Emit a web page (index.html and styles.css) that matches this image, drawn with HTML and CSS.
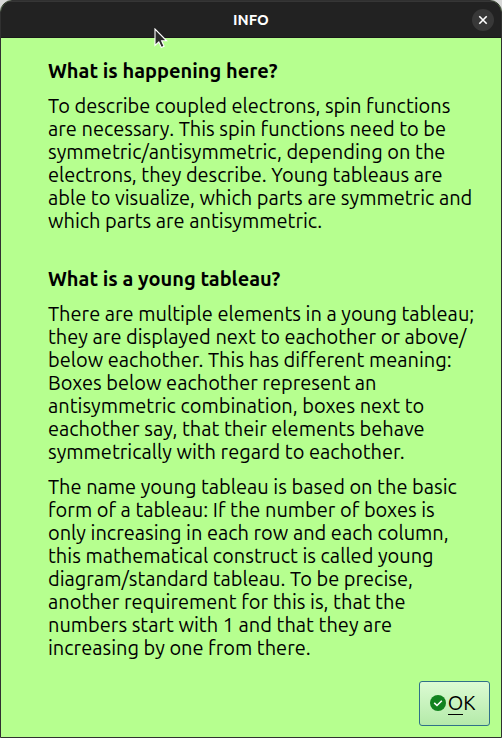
FILE: index.html
```
<!DOCTYPE html>
<html lang="en">
<head>
<meta charset="utf-8">
<meta name="viewport" content="width=device-width, initial-scale=1">
<title>INFO</title>
<link rel="stylesheet" href="styles.css">
</head>
<body>
<div class="window" role="dialog" aria-labelledby="window-title">
  <header class="titlebar">
    <span class="title" id="window-title">INFO</span>
    <button class="close" type="button" aria-label="Close">
      <svg width="22" height="22" viewBox="0 0 22 22" aria-hidden="true"><path d="M7.300 7.300l7.400 7.400M14.700 7.300l-7.400 7.400" stroke="#fff" stroke-width="1.600" fill="none"/></svg>
    </button>
  </header>
  <main class="content">
    <section class="section">
      <h2>What is happening here?</h2>
      <p>To describe coupled electrons, spin functions<br>are necessary. This spin functions need to be<br>symmetric/antisymmetric, depending on the<br>electrons, they describe. Young tableaus are<br>able to visualize, which parts are symmetric and<br>which parts are antisymmetric.</p>
    </section>
    <section class="section">
      <h2>What is a young tableau?</h2>
      <p>There are multiple elements in a young tableau;<br>they are displayed next to eachother or above/<br>below eachother. This has different meaning:<br>Boxes below eachother represent an<br>antisymmetric combination, boxes next to<br>eachother say, that their elements behave<br>symmetrically with regard to eachother.</p>
      <p>The name young tableau is based on the basic<br>form of a tableau: If the number of boxes is<br>only increasing in each row and each column,<br>this mathematical construct is called young<br>diagram/standard tableau. To be precise,<br>another requirement for this is, that the<br>numbers start with 1 and that they are<br>increasing by one from there.</p>
    </section>
  </main>
  <footer class="actions">
    <button class="ok" type="button" accesskey="o">
      <svg width="16" height="16" viewBox="0 0 16 16" aria-hidden="true"><circle cx="8" cy="8" r="8" fill="#12831f"/><path d="M4.200 7.800l2.800 2.700 4.800-4.700" stroke="#fff" stroke-width="1.600" fill="none"/></svg>
      <span><span class="mnemonic">O</span>K</span>
    </button>
  </footer>
  <svg class="pointer" width="14" height="21" viewBox="0 0 14 21" aria-hidden="true"><path d="M1 1v16.500l3.800-3.600 2.500 5.600 2.800-1.200-2.500-5.500h5z" fill="#2b2b2b" stroke="#fff" stroke-width="1.100"/></svg>
</div>
</body>
</html>
```
FILE: styles.css
```
* {
  box-sizing: border-box;
}

body {
  margin: 0;
  background: #d8d8d8;
  color: #000;
  font: 20px/23px Ubuntu, "Noto Sans", sans-serif;
}

.window {
  position: relative;
  display: flex;
  flex-direction: column;
  min-height: 100vh;
  overflow: hidden;
  border: 1px solid #303030;
  border-radius: 12px 12px 0 0;
  background: #b6ff8f;
}

.titlebar {
  display: grid;
  grid-template-columns: 1fr auto 1fr;
  align-items: center;
  height: 37px;
  padding: 0 7px;
  border-top: 1px solid #363636;
  border-bottom: 1px solid #191919;
  background: #222;
}

.title {
  grid-column: 2;
  color: #fff;
  font-size: 15px;
  font-weight: 700;
}

.close {
  display: flex;
  justify-self: end;
  padding: 0;
  border: 0;
  border-radius: 50%;
  background: #383838;
}

.content {
  flex: 1;
  padding: 21px 0 22px 47px;
  white-space: nowrap;
}

.section + .section {
  margin-top: 35px;
}

h2 {
  margin: 0;
  font-size: 20px;
  font-weight: 700;
}

p {
  margin: 12px 0 0;
}

.actions {
  display: flex;
  justify-content: flex-end;
  padding: 0 11px 11px;
}

.ok {
  display: flex;
  align-items: center;
  justify-content: center;
  gap: 2px;
  width: 71px;
  height: 45px;
  padding: 0 4px 2px 0;
  border: 1px solid #2f7088;
  border-radius: 3px;
  background: linear-gradient(#dcfbd3, #b4eaa9);
  color: #000;
  font: inherit;
}

.mnemonic {
  border-bottom: 1px solid #000;
}

.pointer {
  position: absolute;
  top: 27px;
  left: 153px;
}
```
